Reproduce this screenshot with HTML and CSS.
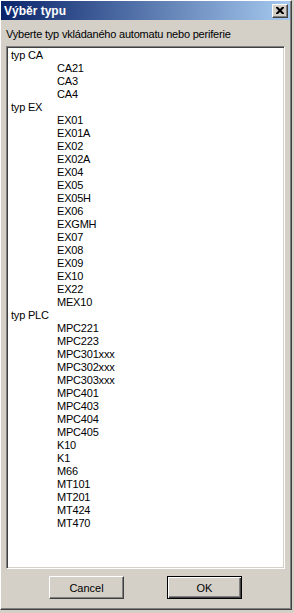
FILE: index.html
```html
<!DOCTYPE html>
<html lang="cs">
  <head>
    <meta charset="UTF-8" />
    <title>Výběr typu</title>
    <link rel="stylesheet" href="styles.css">
  </head>
  <body>
    <div class="window">
      <div class="titlebar">
        <span class="title">Výběr typu</span>
        <span class="close-btn">
          <svg width="8" height="7" viewBox="0 0 8 7">
            <path d="M0 0h2l2 2 2-2h2v1l-2.5 2.5 2.5 2.5v1h-2l-2-2-2 2h-2v-1l2.5-2.5-2.5-2.5z" fill="#000"/>
          </svg>
        </span>
      </div>

      <div class="content">
        <div class="prompt">Vyberte typ vkládaného automatu nebo periferie</div>

        <div class="listbox">
          <ul class="tree">
            <li class="group">typ CA</li>
            <li>CA21</li>
            <li>CA3</li>
            <li>CA4</li>
            <li class="group">typ EX</li>
            <li>EX01</li>
            <li>EX01A</li>
            <li>EX02</li>
            <li>EX02A</li>
            <li>EX04</li>
            <li>EX05</li>
            <li>EX05H</li>
            <li>EX06</li>
            <li>EXGMH</li>
            <li>EX07</li>
            <li>EX08</li>
            <li>EX09</li>
            <li>EX10</li>
            <li>EX22</li>
            <li>MEX10</li>
            <li class="group">typ PLC</li>
            <li>MPC221</li>
            <li>MPC223</li>
            <li>MPC301xxx</li>
            <li>MPC302xxx</li>
            <li>MPC303xxx</li>
            <li>MPC401</li>
            <li>MPC403</li>
            <li>MPC404</li>
            <li>MPC405</li>
            <li>K10</li>
            <li>K1</li>
            <li>M66</li>
            <li>MT101</li>
            <li>MT201</li>
            <li>MT424</li>
            <li>MT470</li>
          </ul>
        </div>

        <div class="buttons">
          <button class="btn">Cancel</button>
          <button class="btn default">OK</button>
        </div>
      </div>
    </div>
  </body>
</html>
```

FILE: styles.css
```css
body {
  margin: 0;
  background: #d4d0c8;
  font-family: "Liberation Sans", Arial, sans-serif;
  font-size: 11px;
  letter-spacing: -0.2px;
  color: #000;
}

/* okno dialogu */
.window {
  width: 292px;
  height: 610px;
  box-sizing: border-box;
  border: 1px solid;
  border-color: #fff #404040 #404040 #fff;
  box-shadow: inset -1px -1px #808080;
  background: #d4d0c8;
  display: flex;
  flex-direction: column;
  padding-right: 1px;
}

.titlebar {
  height: 19px;
  display: flex;
  align-items: center;
  padding: 0 2px 0 3px;
  background: linear-gradient(to right, #0a246a, #a6caf0);
}

.title {
  color: #fff;
  font-weight: bold;
  font-size: 12px;
  letter-spacing: 0;
}

.close-btn {
  margin-left: auto;
  width: 16px;
  height: 14px;
  box-sizing: border-box;
  background: #d4d0c8;
  border: 1px solid;
  border-color: #fff #404040 #404040 #fff;
  box-shadow: inset -1px -1px #808080;
  display: flex;
  align-items: center;
  justify-content: center;
}

.content {
  flex: 1;
  display: flex;
  flex-direction: column;
  padding: 0 5px 0 5px;
}

.prompt {
  padding-top: 8px;
  line-height: 13px;
}

/* seznam typů */
.listbox {
  flex: 1;
  margin-top: 5px;
  background: #fff;
  border: 1px solid;
  border-color: #808080 #fff #fff #808080;
  box-shadow: inset 1px 1px #404040, inset -1px -1px #d4d0c8;
  padding: 2px 2px;
}

.tree {
  list-style: none;
  margin: 0;
  padding: 0;
}

.tree li {
  line-height: 13px;
  padding-left: 48px;
}

.tree li.group {
  padding-left: 2px;
}

.buttons {
  display: flex;
  justify-content: center;
  gap: 43px;
  margin: 7px 0 10px;
}

.btn {
  width: 75px;
  height: 23px;
  font-family: "Liberation Sans", Arial, sans-serif;
  font-size: 11px;
  background: #d4d0c8;
  border: 1px solid;
  border-color: #fff #404040 #404040 #fff;
  box-shadow: inset -1px -1px #808080;
  padding: 0;
  margin: 0;
}

.btn.default {
  border-color: #000;
  box-shadow: inset 1px 1px #fff, inset -1px -1px #404040, inset -2px -2px #808080;
}
```
